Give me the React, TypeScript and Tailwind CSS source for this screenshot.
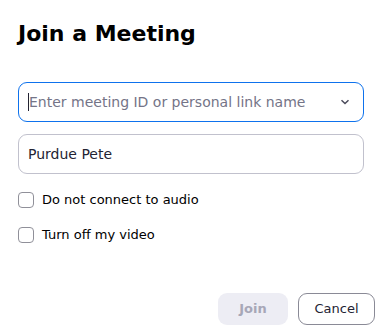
export default function App() {
  return (
    <div className="h-[336px] w-[382px] bg-white font-['DejaVu_Sans',sans-serif] text-[#232333]">
      <div className="px-[18px] pt-[21px]">
        <h1 className="text-[22px] font-bold leading-[26px] text-black">Join a Meeting</h1>

        <div className="mt-[35px] flex h-[40px] w-[346px] items-center rounded-[9px] border border-[#0e72ed] pl-[9px] pr-[13px]">
          <span className="h-[18px] w-px bg-[#232333]" />
          <span className="flex-1 text-[14px] text-[#747487]">Enter meeting ID or personal link name</span>
          <svg width="10" height="6" viewBox="0 0 10 6" className="text-[#4a4a5a]">
            <path d="M1.5 1.2 5 4.5 8.5 1.2" fill="none" stroke="currentColor" strokeWidth="1.5" />
          </svg>
        </div>

        <div className="mt-[12px] flex h-[40px] w-[346px] items-center rounded-[9px] border border-[#c1c1cd] px-[9px]">
          <span className="text-[14px] text-[#232333]">Purdue Pete</span>
        </div>

        <label className="mt-[18px] flex h-[16px] items-center gap-[8px]">
          <span className="h-[16px] w-[16px] rounded-[4px] border border-[#909099]" />
          <span className="text-[13px] text-black">Do not connect to audio</span>
        </label>

        <label className="mt-[19px] flex h-[16px] items-center gap-[8px]">
          <span className="h-[16px] w-[16px] rounded-[4px] border border-[#909099]" />
          <span className="text-[13px] text-black">Turn off my video</span>
        </label>
      </div>

      <div className="mt-[50px] flex justify-end gap-[10px] pr-[7px]">
        <button type="button" className="h-[32px] w-[70px] rounded-[9px] bg-[#ededf4] text-[13px] font-bold text-[#a7a7b7]">
          Join
        </button>
        <button type="button" className="h-[32px] w-[77px] rounded-[9px] border border-[#8a8a96] text-[13px] text-[#232333]">
          Cancel
        </button>
      </div>
    </div>
  );
}
